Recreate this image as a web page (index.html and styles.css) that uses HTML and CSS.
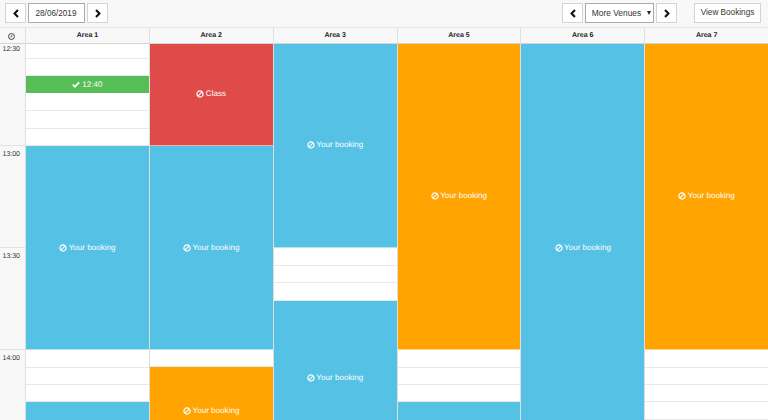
FILE: index.html
```html
<!DOCTYPE html>
<html lang="en">
<head>
<meta charset="utf-8">
<title>Bookings</title>
<link rel="stylesheet" href="styles.css">
</head>
<body>
<svg class="defs" aria-hidden="true">
  <symbol id="ban" viewBox="0 0 14 14"><circle cx="7" cy="7" r="5.4" fill="none" stroke="currentColor" stroke-width="2.1"/><path d="M3.2 10.8 10.8 3.2" stroke="currentColor" stroke-width="2.1"/></symbol>
  <symbol id="left" viewBox="0 0 8 10"><path d="M6.2 1.2 2.4 5 6.2 8.8" fill="none" stroke="currentColor" stroke-width="2.3"/></symbol>
  <symbol id="right" viewBox="0 0 8 10"><path d="M1.8 1.2 5.6 5 1.8 8.8" fill="none" stroke="currentColor" stroke-width="2.3"/></symbol>
</svg>
<header class="toolbar">
  <button class="btn arrow"><svg><use href="#left"/></svg></button>
  <button class="btn field date">28/06/2019</button>
  <button class="btn arrow"><svg><use href="#right"/></svg></button>
  <span class="spacer"></span>
  <button class="btn arrow"><svg><use href="#left"/></svg></button>
  <button class="btn field venues">More Venues<i class="caret"></i></button>
  <button class="btn arrow"><svg><use href="#right"/></svg></button>
  <button class="btn view">View Bookings</button>
</header>
<div class="heads">
  <div class="clock"><svg viewBox="0 0 14 14"><circle cx="7" cy="7" r="5.9" fill="none" stroke="currentColor" stroke-width="1.7"/><path d="M7.5 3.8V7.6H4.8" fill="none" stroke="currentColor" stroke-width="1.2"/></svg></div>
  <div>Area 1</div><div>Area 2</div><div>Area 3</div><div>Area 5</div><div>Area 6</div><div>Area 7</div>
</div>
<main class="schedule">
  <div class="times">
    <div class="time first">12:30</div>
    <div class="time">13:00</div>
    <div class="time">13:30</div>
    <div class="time">14:00</div>
  </div>
  <div class="col">
    <div class="slot short"></div><div class="slot"></div>
    <div class="slot green"><svg class="tick" viewBox="0 0 14 12"><path d="M1.4 6.2 5.2 9.8 12.6 2.2" fill="none" stroke="currentColor" stroke-width="3"/></svg>12:40</div>
    <div class="slot tall"></div><div class="slot tall"></div><div class="slot"></div>
    <div class="block blue two-hour"><svg><use href="#ban"/></svg>Your booking</div>
    <div class="slot tall"></div><div class="slot"></div><div class="slot"></div>
    <div class="block blue rest"></div>
  </div>
  <div class="col">
    <div class="block red opening class-session"><svg><use href="#ban"/></svg>Class</div>
    <div class="block blue two-hour"><svg><use href="#ban"/></svg>Your booking</div>
    <div class="slot"></div>
    <div class="block orange late"><svg><use href="#ban"/></svg>Your booking</div>
  </div>
  <div class="col">
    <div class="block blue opening two-hour"><svg><use href="#ban"/></svg>Your booking</div>
    <div class="slot tall"></div><div class="slot"></div><div class="slot tall"></div>
    <div class="block blue afternoon"><svg><use href="#ban"/></svg>Your booking</div>
  </div>
  <div class="col">
    <div class="block orange opening long"><svg><use href="#ban"/></svg>Your booking</div>
    <div class="slot tall"></div><div class="slot"></div><div class="slot"></div>
    <div class="block blue rest"></div>
  </div>
  <div class="col">
    <div class="block blue all-day"><svg><use href="#ban"/></svg>Your booking</div>
  </div>
  <div class="col">
    <div class="block orange opening long"><svg><use href="#ban"/></svg>Your booking</div>
    <div class="slot tall"></div><div class="slot"></div><div class="slot"></div><div class="slot tall"></div>
  </div>
</main>
</body>
</html>
```
FILE: styles.css
```css
* { box-sizing: border-box; }
body {
  margin: 0;
  height: 420px;
  overflow: hidden;
  background: #f8f8f8;
  color: #333;
  font: 8px/12px "Liberation Sans", Arial, sans-serif;
  text-rendering: geometricPrecision;
}
.defs { position: absolute; width: 0; height: 0; }
.toolbar {
  display: flex;
  height: 27px;
  padding: 3px 7px 0 5px;
}
.btn {
  display: flex;
  align-items: center;
  justify-content: center;
  height: 20px;
  padding: 0;
  border: 1px solid #d4d4d4;
  background: #fff;
  color: #333;
  font: inherit;
  line-height: 12px;
  white-space: nowrap;
}
.arrow { width: 21px; color: #111; }
.arrow svg { width: 8px; height: 9px; }
.field { margin: 0 2px; border-color: #aaa; }
.date { width: 57px; padding-right: 1px; padding-top: 1px; font-size: 8.2px; }
.venues { width: 69px; padding-left: 4px; font-size: 8.4px; }
.caret {
  margin-left: 6px;
  border: 2px solid transparent;
  border-top: 4px solid #222;
  border-bottom: 0;
}
.view { width: 67px; margin-left: 17px; font-size: 8.2px; }
.spacer { flex: 1; }
.heads, .schedule {
  display: grid;
  grid-template-columns: 25px repeat(6, 1fr);
}
.heads {
  height: 17px;
  border-top: 1px solid #e5e5e5;
  border-bottom: 1px solid #d5d5d5;
  color: #222;
  font-size: 7px;
  font-weight: bold;
  line-height: 16px;
  text-align: center;
}
.heads div + div { border-left: 1px solid #e0e0e0; }
.heads .clock { display: flex; align-items: center; justify-content: center; padding-right: 3px; }
.clock svg { width: 7px; height: 7px; }
.schedule { height: 376px; overflow: hidden; }
.times { font-size: 7px; line-height: 9px; }
.time { height: 102px; padding: 4px 0 0 2.5px; border-top: 1px solid #e2e2e2; }
.time.first { height: 101px; padding-top: 1px; border-top: 0; }
.col { border-left: 1px solid #dedede; background: #fff; }
.slot { height: 17px; border-bottom: 1px solid #e8e8e8; }
.slot.short { height: 15px; }
.slot.tall { height: 18px; }
.green, .block {
  display: flex;
  align-items: center;
  justify-content: center;
  color: #fff;
  font-size: 8.1px;
}
.slot.green { border: 0; background: #57bd57; }
.block { border-bottom: 1px solid rgba(255, 255, 255, .55); }
.block.opening { padding-bottom: 2px; }
.block svg { width: 8px; height: 8px; margin-right: 1.5px; }
.tick { width: 8px; height: 7px; margin-right: 2px; }
.blue { background-color: #54c1e5; }
.orange { background-color: #ffa400; }
.red { background-color: #df4b48; }
.class-session { height: 102px; }
.two-hour { height: 204px; }
.long { height: 306px; }
.afternoon { height: 155px; }
.late { height: 88px; }
.rest { height: 20px; }
.all-day { height: 408px; }
```
